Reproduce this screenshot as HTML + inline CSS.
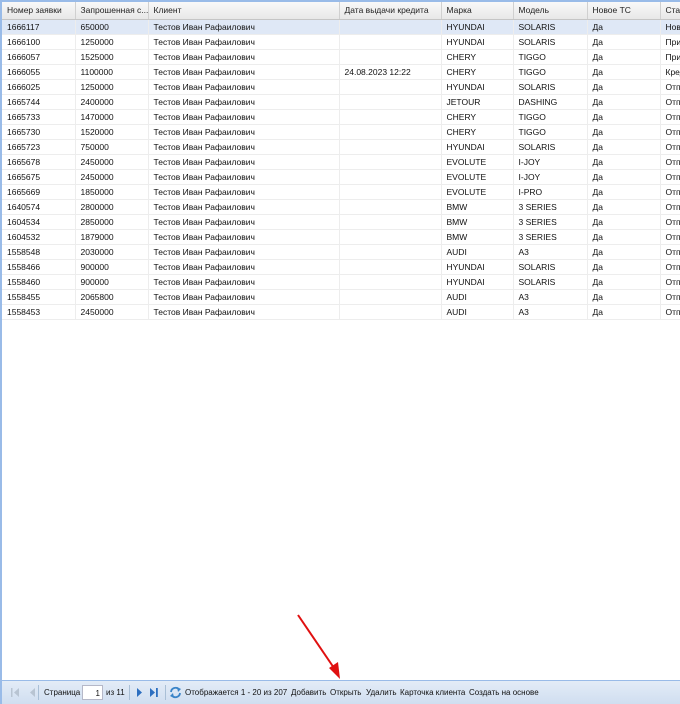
<!DOCTYPE html>
<html><head><meta charset="utf-8"><style>
*{margin:0;padding:0;box-sizing:border-box}
body{width:680px;height:704px;background:#fff;font-family:"Liberation Sans",Arial,sans-serif;font-size:8.5px;color:#111;position:relative;overflow:hidden}
#frame{position:absolute;left:0;top:0;width:680px;height:704px;border-left:2px solid #99bbe8;border-top:2px solid #99bbe8}
table{border-collapse:collapse;position:absolute;left:2px;top:2px;table-layout:fixed;width:700px}
th{height:17px;font-weight:normal;text-align:left;padding-left:5px;background:linear-gradient(#f9f9f9,#e8e8e8);border-right:1px solid #d0d0d0;border-bottom:1px solid #c5c5c5;white-space:nowrap;overflow:hidden;color:#222}
td{height:15px;padding-left:5px;border-right:1px solid #ededed;border-bottom:1px solid #ededed;white-space:nowrap;overflow:hidden}
tr.sel td{background:#dfe8f6}
#bar{position:absolute;left:2px;top:680px;width:678px;height:24px;background:linear-gradient(#e3ecf7,#d0def0);border-top:1px solid #99bbe8;font-size:8px;color:#111}
#bar span{position:absolute;top:7px;white-space:nowrap}
.sep{position:absolute;top:4px;width:1px;height:15px;background:#a9bfd6}
</style></head><body>
<div id="frame"></div>
<table>
<colgroup><col style="width:73px"><col style="width:73px"><col style="width:191px"><col style="width:102px"><col style="width:72px"><col style="width:74px"><col style="width:73px"><col style="width:42px"></colgroup>
<tr><th>Номер заявки</th><th>Запрошенная с...</th><th>Клиент</th><th>Дата выдачи кредита</th><th>Марка</th><th>Модель</th><th>Новое ТС</th><th>Статус</th></tr>
<tr class="sel"><td>1666117</td><td>650000</td><td>Тестов Иван Рафаилович</td><td></td><td>HYUNDAI</td><td>SOLARIS</td><td>Да</td><td>Новая</td></tr>
<tr><td>1666100</td><td>1250000</td><td>Тестов Иван Рафаилович</td><td></td><td>HYUNDAI</td><td>SOLARIS</td><td>Да</td><td>Принята</td></tr>
<tr><td>1666057</td><td>1525000</td><td>Тестов Иван Рафаилович</td><td></td><td>CHERY</td><td>TIGGO</td><td>Да</td><td>Принята</td></tr>
<tr><td>1666055</td><td>1100000</td><td>Тестов Иван Рафаилович</td><td>24.08.2023 12:22</td><td>CHERY</td><td>TIGGO</td><td>Да</td><td>Кредит</td></tr>
<tr><td>1666025</td><td>1250000</td><td>Тестов Иван Рафаилович</td><td></td><td>HYUNDAI</td><td>SOLARIS</td><td>Да</td><td>Отп</td></tr>
<tr><td>1665744</td><td>2400000</td><td>Тестов Иван Рафаилович</td><td></td><td>JETOUR</td><td>DASHING</td><td>Да</td><td>Отп</td></tr>
<tr><td>1665733</td><td>1470000</td><td>Тестов Иван Рафаилович</td><td></td><td>CHERY</td><td>TIGGO</td><td>Да</td><td>Отп</td></tr>
<tr><td>1665730</td><td>1520000</td><td>Тестов Иван Рафаилович</td><td></td><td>CHERY</td><td>TIGGO</td><td>Да</td><td>Отп</td></tr>
<tr><td>1665723</td><td>750000</td><td>Тестов Иван Рафаилович</td><td></td><td>HYUNDAI</td><td>SOLARIS</td><td>Да</td><td>Отп</td></tr>
<tr><td>1665678</td><td>2450000</td><td>Тестов Иван Рафаилович</td><td></td><td>EVOLUTE</td><td>I-JOY</td><td>Да</td><td>Отп</td></tr>
<tr><td>1665675</td><td>2450000</td><td>Тестов Иван Рафаилович</td><td></td><td>EVOLUTE</td><td>I-JOY</td><td>Да</td><td>Отп</td></tr>
<tr><td>1665669</td><td>1850000</td><td>Тестов Иван Рафаилович</td><td></td><td>EVOLUTE</td><td>I-PRO</td><td>Да</td><td>Отп</td></tr>
<tr><td>1640574</td><td>2800000</td><td>Тестов Иван Рафаилович</td><td></td><td>BMW</td><td>3 SERIES</td><td>Да</td><td>Отп</td></tr>
<tr><td>1604534</td><td>2850000</td><td>Тестов Иван Рафаилович</td><td></td><td>BMW</td><td>3 SERIES</td><td>Да</td><td>Отп</td></tr>
<tr><td>1604532</td><td>1879000</td><td>Тестов Иван Рафаилович</td><td></td><td>BMW</td><td>3 SERIES</td><td>Да</td><td>Отп</td></tr>
<tr><td>1558548</td><td>2030000</td><td>Тестов Иван Рафаилович</td><td></td><td>AUDI</td><td>A3</td><td>Да</td><td>Отп</td></tr>
<tr><td>1558466</td><td>900000</td><td>Тестов Иван Рафаилович</td><td></td><td>HYUNDAI</td><td>SOLARIS</td><td>Да</td><td>Отп</td></tr>
<tr><td>1558460</td><td>900000</td><td>Тестов Иван Рафаилович</td><td></td><td>HYUNDAI</td><td>SOLARIS</td><td>Да</td><td>Отп</td></tr>
<tr><td>1558455</td><td>2065800</td><td>Тестов Иван Рафаилович</td><td></td><td>AUDI</td><td>A3</td><td>Да</td><td>Отп</td></tr>
<tr><td>1558453</td><td>2450000</td><td>Тестов Иван Рафаилович</td><td></td><td>AUDI</td><td>A3</td><td>Да</td><td>Отп</td></tr>
</table>
<div id="bar">
<svg style="position:absolute;left:8px;top:6px" width="30" height="12"><rect x="1" y="1" width="1.5" height="9" fill="#b8c4d2"/><path d="M9 1 L4 5.5 L9 10Z" fill="#b8c4d2"/><path d="M25 1 L20 5.5 L25 10Z" fill="#b8c4d2"/></svg>
<div class="sep" style="left:36px"></div>
<span style="left:42px">Страница</span>
<div style="position:absolute;left:80px;top:4px;width:21px;height:15px;background:#fff;border:1px solid #b5b8c8;font-size:8px;text-align:right;padding:3px 2px 0 0">1</div>
<span style="left:104px">из 11</span>
<div class="sep" style="left:127px"></div>
<svg style="position:absolute;left:132px;top:6px" width="30" height="12"><path d="M3 1 L8 5.5 L3 10Z" fill="#2d6fc0"/><path d="M16 1 L21 5.5 L16 10Z" fill="#2d6fc0"/><rect x="22" y="1" width="1.8" height="9" fill="#2d6fc0"/></svg>
<div class="sep" style="left:163px"></div>
<svg style="position:absolute;left:167px;top:5px" width="13" height="13"><path d="M2 6 A4.5 4.5 0 0 1 10 3.5" stroke="#3a84c8" stroke-width="1.8" fill="none"/><path d="M11 7 A4.5 4.5 0 0 1 3 9.5" stroke="#3a84c8" stroke-width="1.8" fill="none"/><path d="M8 1 L12 3 L9 6Z" fill="#3a84c8"/><path d="M5 12 L1 10 L4 7Z" fill="#3a84c8"/></svg>
<span style="left:183px">Отображается 1 - 20 из 207</span>
<span style="left:289px">Добавить</span>
<span style="left:328px">Открыть</span>
<span style="left:364px">Удалить</span>
<span style="left:398px">Карточка клиента</span>
<span style="left:467px">Создать на основе</span>
</div>
<svg style="position:absolute;left:0;top:0" width="680" height="704"><line x1="298" y1="615" x2="334" y2="668" stroke="#e01010" stroke-width="2"/><path d="M329 668 L340 679 L338 662Z" fill="#e01010"/></svg>
</body></html>
